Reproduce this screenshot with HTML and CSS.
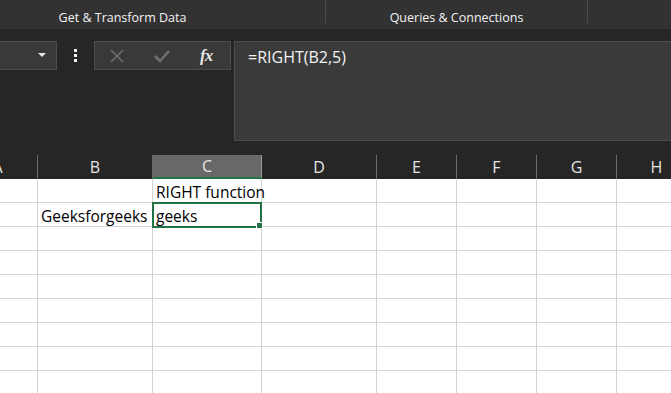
FILE: index.html
```html
<!DOCTYPE html>
<html lang="en">

<head>
    <meta charset="UTF-8">
    <title>RIGHT function</title>
    <link rel="stylesheet" href="styles.css">
</head>

<body>
    <!-- ribbon group labels -->
    <div class="ribbon">
        <div class="group group-get"><span>Get &amp; Transform Data</span></div>
        <div class="group group-queries"><span>Queries &amp; Connections</span></div>
        <div class="group group-rest"></div>
    </div>

    <!-- formula bar -->
    <div class="formula-bar">
        <div class="name-box">
            <svg class="drop" width="8" height="5" viewBox="0 0 8 5"><polygon points="0 0, 8 0, 4 4" fill="#e8e8e8" /></svg>
        </div>
        <div class="dots"><i></i><i></i><i></i></div>
        <div class="buttons">
            <svg class="btn-x" width="16" height="16" viewBox="0 0 16 16">
                <path d="M2 2 L14 14 M14 2 L2 14" stroke="#6e6e6e" stroke-width="1.6" fill="none" />
            </svg>
            <svg class="btn-ok" width="18" height="16" viewBox="0 0 18 16">
                <path d="M2 8 L7 13 L16 3" stroke="#6e6e6e" stroke-width="2.6" fill="none" />
            </svg>
            <span class="fx">fx</span>
        </div>
        <div class="formula">=RIGHT(B2,5)</div>
    </div>

    <!-- sheet -->
    <div class="sheet">
        <div class="head">A</div>
        <div class="head">B</div>
        <div class="head selected">C</div>
        <div class="head">D</div>
        <div class="head">E</div>
        <div class="head">F</div>
        <div class="head">G</div>
        <div class="head">H</div>

        <div class="cell"></div>
        <div class="cell"></div>
        <div class="cell">RIGHT function</div>
        <div class="cell"></div>
        <div class="cell"></div>
        <div class="cell"></div>
        <div class="cell"></div>
        <div class="cell"></div>

        <div class="cell"></div>
        <div class="cell">Geeksforgeeks</div>
        <div class="cell active">geeks</div>
        <div class="cell"></div>
        <div class="cell"></div>
        <div class="cell"></div>
        <div class="cell"></div>
        <div class="cell"></div>
    </div>
    <div class="rows"></div>
</body>

</html>
```

FILE: styles.css
```css
body {
    margin: 0;
    width: 671px;
    height: 393px;
    overflow: hidden;
    background: #262626;
    font-family: "Open Sans", "Noto Sans", sans-serif;
}

.ribbon {
    height: 29px;
    background: #323232;
    display: flex;
    color: #f2f2f2;
    font-size: 12.5px;
}

.group {
    height: 23px;
    border-right: 1px solid #4a4a4a;
    display: flex;
    align-items: flex-end;
    justify-content: center;
    flex: none;
}

.group span {
    line-height: 15px;
    margin-bottom: -2px;
}

.group-get {
    width: 405px;
    margin-left: -80px;
}

.group-queries {
    width: 261px;
}

.group-rest {
    width: 120px;
}

/* formula bar */
.formula-bar {
    display: flex;
    align-items: flex-start;
    padding-top: 12px;
    height: 114px;
}

.name-box {
    height: 27px;
    background: #393939;
    border: 1px solid #4c4c4c;
    border-left: none;
    display: flex;
    align-items: center;
    justify-content: flex-end;
    padding-right: 10px;
    box-sizing: content-box;
    flex: none;
    width: 46px;
}

.dots {
    width: 37px;
    height: 29px;
    display: flex;
    flex-direction: column;
    align-items: center;
    justify-content: center;
    gap: 2px;
    flex: none;
}

.dots i {
    display: block;
    width: 3px;
    height: 3px;
    background: #f0f0f0;
}

.buttons {
    width: 121px;
    height: 27px;
    background: #393939;
    border: 1px solid #4c4c4c;
    display: flex;
    align-items: center;
    padding-left: 14px;
    box-sizing: content-box;
    flex: none;
}

.btn-ok {
    margin-left: 28px;
}

.fx {
    margin-left: 29px;
    font-family: "Liberation Serif", "DejaVu Serif", serif;
    font-style: italic;
    font-weight: bold;
    font-size: 17px;
    color: #e6e6e6;
    letter-spacing: -1px;
}

.formula {
    margin-left: 3px;
    flex: 1;
    height: 100px;
    background: #3a3a3a;
    border: 1px solid #4c4c4c;
    border-right: none;
    color: #f2f2f2;
    font-size: 16px;
    padding: 4px 0 0 13px;
    box-sizing: border-box;
    line-height: 22px;
}

/* grid */
.sheet {
    display: grid;
    grid-template-columns: 80px 115px 109px 115px 80px 80px 80px 80px;
    grid-auto-rows: 24px;
    margin-left: -42px;
    background: #fff;
}

.head {
    background: #262626;
    color: #e6e6e6;
    font-size: 16px;
    display: flex;
    align-items: center;
    justify-content: center;
    border-right: 1px solid #6a6a6a;
    box-sizing: border-box;
}

.head.selected {
    background: #686868;
    border-bottom: 2px solid #217346;
    border-right-color: #9a9a9a;
}

.cell {
    border-right: 1px solid #d4d4d4;
    border-bottom: 1px solid #d4d4d4;
    box-sizing: border-box;
    font-size: 15.5px;
    color: #000;
    padding-left: 3px;
    line-height: 26px;
    white-space: nowrap;
    position: relative;
}

.cell.active::after {
    content: "";
    position: absolute;
    left: -1px;
    top: -1px;
    right: -1px;
    bottom: -2px;
    border: 2px solid #217346;
}

.cell.active::before {
    content: "";
    position: absolute;
    right: -2px;
    bottom: -3px;
    width: 5px;
    height: 5px;
    background: #217346;
    border: 1px solid #fff;
    z-index: 1;
}

.rows {
    height: 166px;
    margin-left: -42px;
    background-color: #fff;
    background-image:
        linear-gradient(to bottom, transparent 23px, #d4d4d4 23px),
        linear-gradient(to right, transparent 79px, #d4d4d4 79px, #d4d4d4 80px, transparent 80px, transparent 194px, #d4d4d4 194px, #d4d4d4 195px, transparent 195px, transparent 303px, #d4d4d4 303px, #d4d4d4 304px, transparent 304px, transparent 418px, #d4d4d4 418px, #d4d4d4 419px, transparent 419px, transparent 498px, #d4d4d4 498px, #d4d4d4 499px, transparent 499px, transparent 578px, #d4d4d4 578px, #d4d4d4 579px, transparent 579px, transparent 658px, #d4d4d4 658px, #d4d4d4 659px, transparent 659px);
    background-size: 100% 24px, 100% 100%;
}
```
